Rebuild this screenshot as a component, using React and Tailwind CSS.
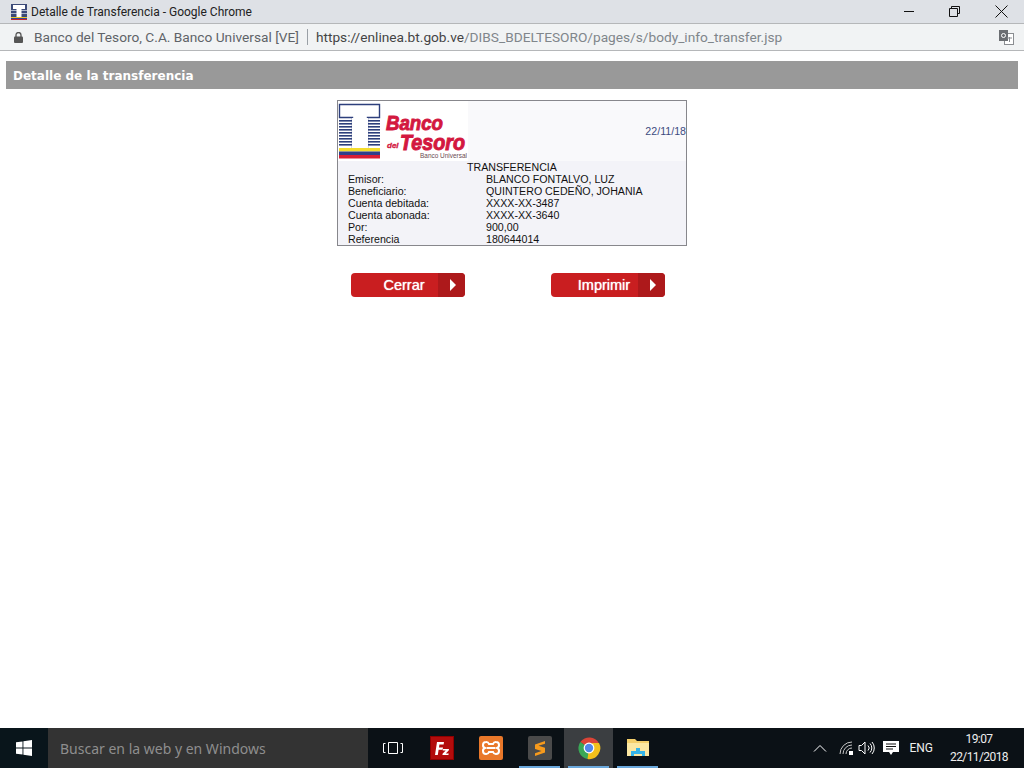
import React from 'react';

const rows = [
  ['Emisor:', 'BLANCO FONTALVO, LUZ'],
  ['Beneficiario:', 'QUINTERO CEDEÑO, JOHANIA'],
  ['Cuenta debitada:', 'XXXX-XX-3487'],
  ['Cuenta abonada:', 'XXXX-XX-3640'],
  ['Por:', '900,00'],
  ['Referencia', '180644014'],
];

const stripes = [19, 22, 25, 28, 31, 34, 37, 40, 43];

const Favicon = () => (
  <svg width="16" height="16" viewBox="0 0 16 16">
    <rect width="16" height="13" fill="#3b4a78" />
    <rect y="6" width="16" height="1" fill="#aeb6cc" />
    <rect y="9" width="16" height="1" fill="#aeb6cc" />
    <path d="M2 1h12v4h-3.5v8h-5V5H2z" fill="#fff" />
    <rect y="13" width="16" height="1" fill="#e8c92e" />
    <rect y="14" width="16" height="1" fill="#2d4a9a" />
    <rect y="15" width="16" height="1" fill="#c9202f" />
  </svg>
);

const BankLogo = () => (
  <svg width="130" height="60" viewBox="0 0 130 60" className="block">
    <rect width="130" height="60" fill="#fff" />
    {stripes.map((y) => (
      <rect key={y} x="1" y={y} width="41" height="1.6" fill="#2d3f7c" />
    ))}
    <path d="M1.5 3.5h40v13H29.5V47h-15V16.5H1.5z" fill="#fff" stroke="#2d3f7c" strokeWidth="1.4" />
    <rect x="14" y="17" width="16" height="31" fill="#fff" />
    <rect x="1" y="47" width="41" height="3.5" fill="#f4dc2c" />
    <rect x="1" y="50.5" width="41" height="3.5" fill="#2f3f8c" />
    <rect x="1" y="54" width="41" height="3.5" fill="#d81e35" />
    <text x="48" y="29" fontFamily="Liberation Sans" fontSize="20" fontWeight="bold" fontStyle="italic" fill="#d3183f" stroke="#d3183f" strokeWidth="0.9" textLength="57" lengthAdjust="spacingAndGlyphs">Banco</text>
    <text x="49" y="47" fontFamily="Liberation Sans" fontSize="8" fontWeight="bold" fontStyle="italic" fill="#d3183f" stroke="#d3183f" strokeWidth="0.3">del</text>
    <text x="62" y="49" fontFamily="Liberation Sans" fontSize="22" fontWeight="bold" fontStyle="italic" fill="#d3183f" stroke="#d3183f" strokeWidth="1" textLength="65" lengthAdjust="spacingAndGlyphs">Tesoro</text>
    <text x="82" y="57" fontFamily="Liberation Sans" fontSize="6.5" fill="#6b4a52" textLength="47" lengthAdjust="spacingAndGlyphs">Banco Universal</text>
  </svg>
);

const RedButton = ({ label }) => (
  <button className="flex h-6 w-[114px] items-stretch overflow-hidden rounded-sm bg-[#c91e20] text-white">
    <span className="flex-1 pl-[19px] text-center font-[Liberation_Sans] text-[14.5px] leading-6 [text-shadow:0_0_1px_#fff]">
      {label}
    </span>
    <span className="flex w-[27px] items-center justify-center bg-[#ad191b] pl-[3px]">
      <svg width="6" height="12" viewBox="0 0 6 12"><path d="M0 0l6 6-6 6z" fill="#fff" /></svg>
    </span>
  </button>
);

const Slot = ({ children, active, underline }) => (
  <div className={`relative flex h-10 w-[49px] items-center justify-center ${active ? 'bg-[#3b3e41]' : ''}`}>
    {children}
    {underline && <div className="absolute right-1 bottom-0 left-1 h-[2px] bg-[#6aa8dc]" />}
  </div>
);

export default function App() {
  return (
    <div className="flex h-[768px] w-[1024px] flex-col overflow-hidden bg-white">
      {/* title bar */}
      <div className="flex h-[24px] items-center border-b border-[#b5b7b9] bg-[#dee1e6] pl-[11px] font-[Roboto] text-[#222]">
        <Favicon />
        <span className="ml-1 text-[12px]">Detalle de Transferencia - Google Chrome</span>
        <div className="ml-auto flex items-center">
          <svg width="10" height="2" viewBox="0 0 10 2" className="mr-[35px]"><rect width="10" height="1" fill="#111" /></svg>
          <svg width="11" height="11" viewBox="0 0 11 11" className="mr-[35px]" fill="none" stroke="#111">
            <path d="M2.5 2.5V.5h8v7h-2M.5 2.5h8v8h-8z" />
          </svg>
          <svg width="13" height="13" viewBox="0 0 13 13" className="mr-[16px]" stroke="#111"><path d="M.5.5l12 12M12.5.5l-12 12" /></svg>
        </div>
      </div>

      {/* address bar */}
      <div className="flex h-[27px] items-center border-b border-[#b5b7b9] bg-[#f1f3f4] pl-[14px] font-[Roboto] text-[13.7px]">
        <svg width="9" height="11" viewBox="0 0 9 11"><path d="M2 5V3a2.5 2.5 0 0 1 5 0v2" fill="none" stroke="#555" strokeWidth="1.3" /><rect y="4.5" width="9" height="6.5" rx="1" fill="#555" /></svg>
        <span className="ml-[11px] text-[#5f6368]">Banco del Tesoro, C.A. Banco Universal [VE]</span>
        <span className="mx-2 h-4 w-px bg-[#9aa0a6]" />
        <span className="text-[#444]">https://enlinea.bt.gob.ve</span>
        <span className="text-[#80868b]">/DIBS_BDELTESORO/pages/s/body_info_transfer.jsp</span>
        <svg width="15" height="15" viewBox="0 0 15 15" className="mr-[10px] ml-auto">
          <rect x="5.5" y="3.5" width="9" height="11" fill="#fff" stroke="#8a8d91" />
          <rect width="9" height="11" fill="#6b6e72" />
          <circle cx="4.5" cy="5.5" r="2" fill="none" stroke="#fff" />
          <path d="M8 8h5M10.5 7v5" stroke="#8a8d91" />
        </svg>
      </div>

      {/* page */}
      <div className="flex flex-1 flex-col px-[6px] pt-[10px]">
        <div className="flex h-7 items-center bg-[#999] pt-px pl-[7px] font-[DejaVu_Sans] text-[12px] font-bold text-white">
          Detalle de la transferencia
        </div>

        <div className="mx-auto mt-[11px] w-[350px] border border-[#87878c] bg-[#f3f3f8] font-[Liberation_Sans] text-[10.65px] text-[#111]">
          <div className="flex h-[60px] bg-[#f9f9fb]">
            <BankLogo />
            <span className="mt-[23px] ml-auto text-[#3c4c80]">22/11/18</span>
          </div>
          <div className="h-3 pl-[129px] leading-3">TRANSFERENCIA</div>
          <div className="flex h-[72px] flex-col justify-between pl-[10px]">
            {rows.map(([k, v]) => (
              <div key={k} className="flex h-3 leading-3">
                <span className="w-[138px]">{k}</span>
                <span>{v}</span>
              </div>
            ))}
          </div>
        </div>

        <div className="mt-[27px] ml-[345px] flex gap-[86px]">
          <RedButton label="Cerrar" />
          <RedButton label="Imprimir" />
        </div>
      </div>

      {/* taskbar */}
      <div className="flex h-10 items-center bg-[#0b1116] text-white">
        <div className="flex h-10 w-12 items-center justify-center bg-[#09151b]">
          <svg width="16" height="16" viewBox="0 0 16 16" fill="#fff">
            <path d="M0 2.3L6.5 1.4V7.5H0zM7.4 1.3L16 0V7.5H7.4zM0 8.4H6.5V14.6L0 13.7zM7.4 8.4H16V16L7.4 14.7z" />
          </svg>
        </div>
        <div className="flex h-10 w-[320px] items-center bg-[#333] pl-3 font-['Noto_Sans'] text-[14px] text-[#8e8e8e]">
          Buscar en la web y en Windows
        </div>
        <Slot>
          <svg width="20" height="14" viewBox="0 0 20 14" fill="none" stroke="#fff">
            <path d="M5.5 1.5h9v11h-9zM2.5 2.5H.5v9h2M17.5 2.5h2v9h-2" />
          </svg>
        </Slot>
        <Slot>
          <svg width="24" height="24" viewBox="0 0 24 24">
            <rect width="24" height="24" fill="#8f0000" />
            <rect x="1" y="1" width="22" height="22" fill="#b30c0c" />
            <path d="M5 19l2-13h7l-.4 2.4H9.4l-.4 3h4l-.4 2.4h-4L7.8 19z" fill="#fff" />
            <path d="M13 13h6l-.3 1.6-3 2.9h3l-.3 1.5h-6l.3-1.6 3-2.9h-3z" fill="#fff" />
          </svg>
        </Slot>
        <Slot>
          <svg width="24" height="24" viewBox="0 0 24 24">
            <rect width="24" height="24" rx="2" fill="#e9782a" />
            <path d="M7 6a3 3 0 0 0-3 3 3 3 0 0 0 2 3 3 3 0 0 0-2 3 3 3 0 0 0 3 3 3 3 0 0 0 3-2h4a3 3 0 0 0 3 2 3 3 0 0 0 3-3 3 3 0 0 0-2-3 3 3 0 0 0 2-3 3 3 0 0 0-3-3 3 3 0 0 0-3 2h-4a3 3 0 0 0-3-2zM8 12h8" fill="none" stroke="#fff" strokeWidth="2" />
          </svg>
        </Slot>
        <Slot underline>
          <svg width="24" height="24" viewBox="0 0 24 24">
            <rect width="24" height="24" rx="2" fill="#4a4a4a" />
            <path d="M17 5L7 8.5V13l6.5 2L7 17.2V20l10-3.5v-4.7l-6.5-2 6.5-2z" fill="#f79a1c" />
          </svg>
        </Slot>
        <Slot active underline>
          <svg width="24" height="24" viewBox="0 0 24 24">
            <path d="M12 12L3.3 6A11 11 0 0 1 22 7.5H12z" fill="#db4437" />
            <path d="M12 12L3.3 6A11 11 0 0 0 10.5 23L15 14z" fill="#3aa757" />
            <path d="M12 12l3-5h7A11 11 0 0 1 10.5 23z" fill="#f3c01b" />
            <circle cx="12" cy="12" r="5.4" fill="#fff" />
            <circle cx="12" cy="12" r="4.2" fill="#5287ea" />
          </svg>
        </Slot>
        <Slot underline>
          <svg width="22" height="20" viewBox="0 0 22 20">
            <path d="M0 1h8l2 2h12v15H0z" fill="#f4cf6b" />
            <rect y="5" width="22" height="13" fill="#fbe7a2" />
            <path d="M4 18v-5h5v-3h4v3h5v5h-3v-2H7v2z" fill="#35b4e8" />
          </svg>
        </Slot>

        <div className="ml-auto flex h-10 items-center font-[Roboto] text-white">
          <svg width="14" height="8" viewBox="0 0 14 8" className="mr-[12px]" fill="none" stroke="#fff"><path d="M1 7.5l6-6 6 6" /></svg>
          <svg width="15" height="14" viewBox="0 0 15 14" className="mr-[4px]" fill="none" stroke="#c8c8c8">
            <path d="M1 13A12 12 0 0 1 13 1M4 13a9 9 0 0 1 9-9M7 13a6 6 0 0 1 6-6" />
            <rect x="10" y="10" width="4" height="4" fill="#fff" stroke="none" />
          </svg>
          <svg width="17" height="14" viewBox="0 0 17 14" className="mr-[8px]" fill="none" stroke="#fff">
            <path d="M1 4.5h2.5L7 1v12L3.5 9.5H1zM10 4.5a3.5 3.5 0 0 1 0 5M12 2.5a6.5 6.5 0 0 1 0 9M14 1a9 9 0 0 1 0 12" />
          </svg>
          <svg width="16" height="16" viewBox="0 0 16 16" className="mr-[10px]">
            <path d="M0 1h16v11H10l-2 3-2-3H0z" fill="#fff" />
            <path d="M3 4h10M3 6.5h10M3 9h7" stroke="#111" />
          </svg>
          <span className="mr-[17px] text-[12px] text-[#eee]">ENG</span>
          <div className="mr-[16px] w-[58px] text-center text-[12px] leading-[18px] tracking-[-0.6px] text-[#eee]">
            <div>19:07</div>
            <div>22/11/2018</div>
          </div>
        </div>
      </div>
    </div>
  );
}
